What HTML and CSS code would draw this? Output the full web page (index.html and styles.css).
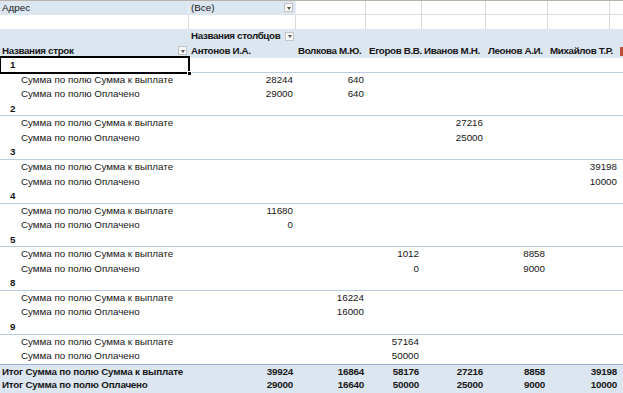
FILE: index.html
```html
<!DOCTYPE html>
<html lang="ru">
<head>
<meta charset="utf-8">
<link rel="stylesheet" href="styles.css">
</head>
<body>
<div class="sheet">
  <div class="filter">
    <div class="frow first">
      <div class="fcell blue">Адрес</div>
      <div class="fcell blue split"><span>(Все)</span><span class="dd"></span></div>
      <div class="fcell grid"></div><div class="fcell grid"></div><div class="fcell grid"></div>
      <div class="fcell grid"></div><div class="fcell grid"></div><div class="fcell gridlast"></div>
    </div>
    <div class="frow">
      <div class="fcell grid"></div><div class="fcell grid"></div><div class="fcell grid"></div>
      <div class="fcell grid"></div><div class="fcell grid"></div><div class="fcell grid"></div>
      <div class="fcell grid"></div><div class="fcell"></div>
    </div>
  </div>

  <div class="pivot">
    <div class="prow head">
      <div class="cell"></div>
      <div class="cell bold split"><span>Названия столбцов</span><span class="dd"></span></div>
      <div class="cell"></div><div class="cell"></div><div class="cell"></div><div class="cell"></div><div class="cell"></div><div class="cell"></div>
    </div>
    <div class="prow head">
      <div class="cell bold split"><span>Названия строк</span><span class="dd"></span></div>
      <div class="cell bold">Антонов И.А.</div>
      <div class="cell bold">Волкова М.Ю.</div>
      <div class="cell bold">Егоров В.В.</div>
      <div class="cell bold">Иванов М.Н.</div>
      <div class="cell bold">Леонов А.И.</div>
      <div class="cell bold">Михайлов Т.Р.</div>
      <div class="cell"><span class="redmark"></span></div>
    </div>

    <div class="prow group">
      <div class="cell glabel selected">1</div>
    </div>
    <div class="prow">
      <div class="cell label">Сумма по полю Сумма к выплате</div>
      <div class="cell num">28244</div><div class="cell num">640</div><div class="cell num"></div><div class="cell num"></div><div class="cell num"></div><div class="cell num"></div>
    </div>
    <div class="prow">
      <div class="cell label">Сумма по полю Оплачено</div>
      <div class="cell num">29000</div><div class="cell num">640</div><div class="cell num"></div><div class="cell num"></div><div class="cell num"></div><div class="cell num"></div>
    </div>

    <div class="prow group"><div class="cell glabel">2</div></div>
    <div class="prow">
      <div class="cell label">Сумма по полю Сумма к выплате</div>
      <div class="cell num"></div><div class="cell num"></div><div class="cell num"></div><div class="cell num">27216</div><div class="cell num"></div><div class="cell num"></div>
    </div>
    <div class="prow">
      <div class="cell label">Сумма по полю Оплачено</div>
      <div class="cell num"></div><div class="cell num"></div><div class="cell num"></div><div class="cell num">25000</div><div class="cell num"></div><div class="cell num"></div>
    </div>

    <div class="prow group"><div class="cell glabel">3</div></div>
    <div class="prow">
      <div class="cell label">Сумма по полю Сумма к выплате</div>
      <div class="cell num"></div><div class="cell num"></div><div class="cell num"></div><div class="cell num"></div><div class="cell num"></div><div class="cell num">39198</div>
    </div>
    <div class="prow">
      <div class="cell label">Сумма по полю Оплачено</div>
      <div class="cell num"></div><div class="cell num"></div><div class="cell num"></div><div class="cell num"></div><div class="cell num"></div><div class="cell num">10000</div>
    </div>

    <div class="prow group"><div class="cell glabel">4</div></div>
    <div class="prow">
      <div class="cell label">Сумма по полю Сумма к выплате</div>
      <div class="cell num">11680</div><div class="cell num"></div><div class="cell num"></div><div class="cell num"></div><div class="cell num"></div><div class="cell num"></div>
    </div>
    <div class="prow">
      <div class="cell label">Сумма по полю Оплачено</div>
      <div class="cell num">0</div><div class="cell num"></div><div class="cell num"></div><div class="cell num"></div><div class="cell num"></div><div class="cell num"></div>
    </div>

    <div class="prow group"><div class="cell glabel">5</div></div>
    <div class="prow">
      <div class="cell label">Сумма по полю Сумма к выплате</div>
      <div class="cell num"></div><div class="cell num"></div><div class="cell num">1012</div><div class="cell num"></div><div class="cell num">8858</div><div class="cell num"></div>
    </div>
    <div class="prow">
      <div class="cell label">Сумма по полю Оплачено</div>
      <div class="cell num"></div><div class="cell num"></div><div class="cell num">0</div><div class="cell num"></div><div class="cell num">9000</div><div class="cell num"></div>
    </div>

    <div class="prow group"><div class="cell glabel">8</div></div>
    <div class="prow">
      <div class="cell label">Сумма по полю Сумма к выплате</div>
      <div class="cell num"></div><div class="cell num">16224</div><div class="cell num"></div><div class="cell num"></div><div class="cell num"></div><div class="cell num"></div>
    </div>
    <div class="prow">
      <div class="cell label">Сумма по полю Оплачено</div>
      <div class="cell num"></div><div class="cell num">16000</div><div class="cell num"></div><div class="cell num"></div><div class="cell num"></div><div class="cell num"></div>
    </div>

    <div class="prow group"><div class="cell glabel">9</div></div>
    <div class="prow">
      <div class="cell label">Сумма по полю Сумма к выплате</div>
      <div class="cell num"></div><div class="cell num"></div><div class="cell num">57164</div><div class="cell num"></div><div class="cell num"></div><div class="cell num"></div>
    </div>
    <div class="prow">
      <div class="cell label">Сумма по полю Оплачено</div>
      <div class="cell num"></div><div class="cell num"></div><div class="cell num">50000</div><div class="cell num"></div><div class="cell num"></div><div class="cell num"></div>
    </div>

    <div class="prow total first-total">
      <div class="cell bold">Итог Сумма по полю Сумма к выплате</div>
      <div class="cell num bold">39924</div><div class="cell num bold">16864</div><div class="cell num bold">58176</div><div class="cell num bold">27216</div><div class="cell num bold">8858</div><div class="cell num bold">39198</div><div class="cell"></div>
    </div>
    <div class="prow total">
      <div class="cell bold">Итог Сумма по полю Оплачено</div>
      <div class="cell num bold">29000</div><div class="cell num bold">16640</div><div class="cell num bold">50000</div><div class="cell num bold">25000</div><div class="cell num bold">9000</div><div class="cell num bold">10000</div><div class="cell"></div>
    </div>
  </div>
</div>
</body>
</html>
```
FILE: styles.css
```css
html, body {
  margin: 0;
  padding: 0;
  background: #ffffff;
}
body {
  width: 623px;
  height: 393px;
  overflow: hidden;
  font-family: "Liberation Sans", Arial, sans-serif;
  font-size: 9.8px;
  color: #161616;
}
.sheet {
  display: flex;
  flex-direction: column;
}

/* filter area */
.filter {
  display: flex;
  flex-direction: column;
  border-top: 1px solid #b9b2a8;
}
.frow {
  display: grid;
  grid-template-columns: 189px 107px 70px 56px 64px 62px 62px 13px;
  height: 14.55px;
}
.frow.first {
  height: 13.55px;
}
.frow.first .grid,
.frow.first .gridlast {
  border-bottom: 1px solid #dadada;
}
.fcell {
  box-sizing: border-box;
  line-height: 13.5px;
  padding-left: 2px;
  white-space: nowrap;
}
.fcell.blue {
  background: #dce6f1;
  border-right: 1px solid #e9eef5;
}
.fcell.grid {
  border-right: 1px solid #dadada;
}

/* pivot */
.pivot {
  display: flex;
  flex-direction: column;
}
.prow {
  display: grid;
  grid-template-columns: 189px 107px 71px 55px 64px 62px 72px 3px;
  height: 14.55px;
  box-sizing: border-box;
}
.cell {
  box-sizing: border-box;
  line-height: 14.5px;
  padding-left: 2px;
  white-space: nowrap;
  position: relative;
}
.bold {
  font-weight: bold;
  letter-spacing: -0.2px;
}
.split {
  display: flex;
  justify-content: space-between;
  align-items: center;
  padding-right: 2px;
}
.head {
  background: #dce6f1;
}
.head .cell.bold {
  letter-spacing: -0.35px;
}
.group {
  border-bottom: 1px solid #b8cce4;
}
.glabel {
  font-weight: bold;
  padding-left: 10px;
  grid-column: 1 / 2;
}
.label {
  padding-left: 21px;
}
.num {
  text-align: right;
  padding-right: 3px;
  padding-left: 0;
}
.total {
  background: #dce6f1;
}
.first-total {
  border-top: 1px solid #95b3d7;
}

/* dropdown button */
.dd {
  width: 9px;
  height: 9px;
  box-sizing: border-box;
  border: 1px solid #c4c4c4;
  background: #f7f7f7;
  display: flex;
  align-items: center;
  justify-content: center;
  flex: none;
}
.dd::before {
  content: "";
  border-left: 2.5px solid transparent;
  border-right: 2.5px solid transparent;
  border-top: 3px solid #555;
  margin-top: 1px;
}

/* selected cell */
.selected {
  outline: 2px solid #000;
  outline-offset: -1px;
  height: 15.5px;
  margin-top: -1px;
  line-height: 16px;
}
.selected::after {
  content: "";
  position: absolute;
  right: -3px;
  bottom: -3px;
  width: 5px;
  height: 5px;
  background: #000;
  border: 1px solid #fff;
  box-sizing: border-box;
}

.redmark {
  position: absolute;
  left: 0;
  top: 3px;
  width: 3px;
  height: 9px;
  background: #b8503a;
}
```
